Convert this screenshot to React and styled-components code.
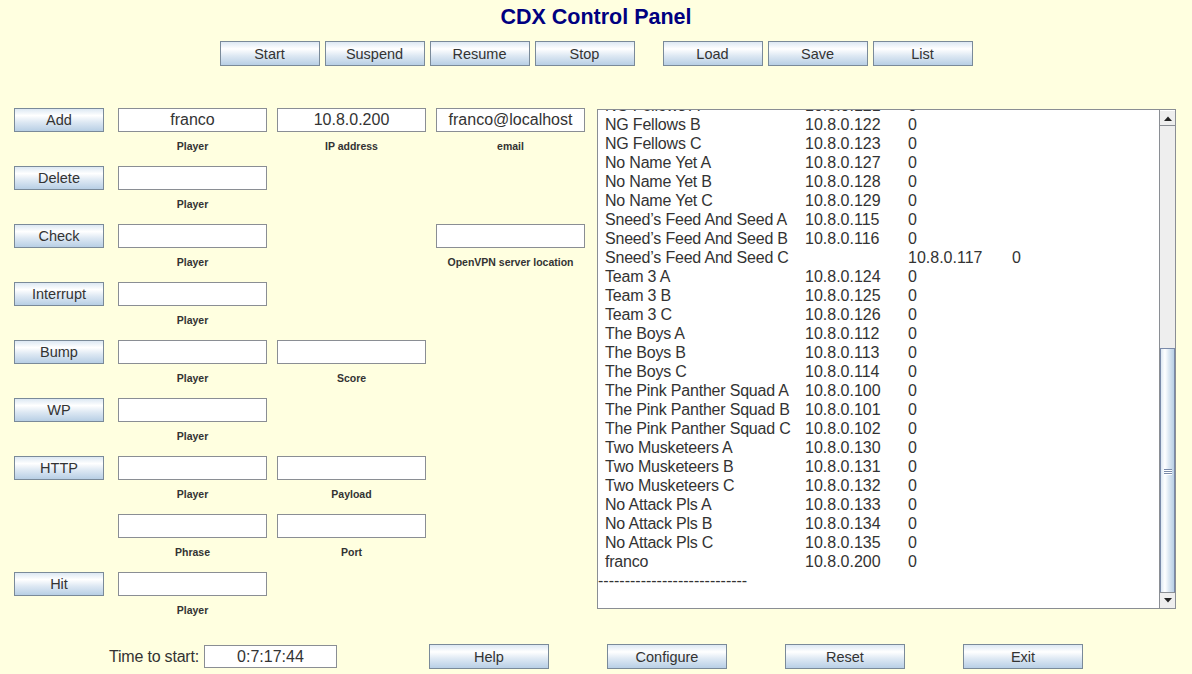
import React from 'react';
import styled, { createGlobalStyle } from 'styled-components';

const GlobalStyle = createGlobalStyle`
  html, body { margin: 0; padding: 0; background: #ffffe0; }
  body { font-family: "Liberation Sans", Arial, sans-serif; color: #333; }
`;

const FONT = `"Liberation Sans", Arial, sans-serif`;

const Page = styled.div`
  width: 1192px;
  height: 674px;
  display: flex;
  flex-direction: column;
  background: #ffffe0;
  overflow: hidden;
`;

const Title = styled.h1`
  margin: 0;
  padding-top: 5px;
  height: 30px;
  box-sizing: border-box;
  font: bold 21.5px/25px ${FONT};
  color: #000080;
  text-align: center;
`;

const Toolbar = styled.div`
  display: flex;
  justify-content: center;
  gap: 28px;
  margin-top: 11px;
`;

const BtnGroup = styled.div`
  display: flex;
  gap: 5px;
`;

const Btn = styled.button`
  box-sizing: border-box;
  width: ${p => p.$w || 90}px;
  height: ${p => p.$h || 24}px;
  padding: 0;
  border: 1px solid #7a8a99;
  border-radius: 0;
  background: linear-gradient(to bottom, #dde8f3 0%, #ffffff 30%, #dde8f3 60%, #b8cfe5 100%);
  font: 14.5px ${FONT};
  color: #333;
  cursor: pointer;
`;

const Main = styled.div`
  display: flex;
  align-items: flex-start;
  margin-top: 42px;
`;

const LeftPanel = styled.div`
  width: 585px;
  padding-left: 14px;
  box-sizing: border-box;
  display: flex;
  flex-direction: column;
`;

const FormRow = styled.div`
  display: grid;
  grid-template-columns: 104px 159px 159px 149px;
  height: 58px;
  flex-shrink: 0;
  align-items: start;
`;

const Field = styled.div`
  display: flex;
  flex-direction: column;
  align-items: center;
  width: 149px;
`;

const Input = styled.input`
  box-sizing: border-box;
  width: ${p => p.$w || 149}px;
  height: ${p => p.$h || 24}px;
  margin: 0 0 0 ${p => p.$ml || 0}px;
  padding: 0 2px;
  border: 1px solid #8a8e94;
  border-radius: 0;
  background: #fff;
  font: 16px ${FONT};
  color: #333;
  text-align: center;
  outline: none;
`;

const Caption = styled.div`
  margin-top: 8px;
  font: bold 10.5px/12px ${FONT};
  color: #333;
  white-space: nowrap;
`;

const ListBox = styled.div`
  box-sizing: border-box;
  width: 579px;
  height: 500px;
  margin-left: 12px;
  margin-top: 1px;
  border: 1px solid #8a8e94;
  background: #fff;
  display: flex;
  flex-shrink: 0;
`;

const ListView = styled.div`
  flex: 1;
  overflow: hidden;
  font: 16px/19px ${FONT};
  color: #333;
`;

const ListInner = styled.div`
  margin-top: -14px;
`;

const Row = styled.div`
  display: grid;
  grid-template-columns: 200px 103px 104px auto;
  padding-left: ${p => (p.$flush ? 0 : 7)}px;
  height: 19px;
  white-space: pre;
`;

const Name = styled.span`
  letter-spacing: -0.2px;
`;

const ScrollBar = styled.div`
  width: 16px;
  box-sizing: border-box;
  border-left: 1px solid #8a8e94;
  display: flex;
  flex-direction: column;
  background: #eeeeee;
`;

const ArrowBtn = styled.div`
  height: 16px;
  box-sizing: border-box;
  display: flex;
  align-items: center;
  justify-content: center;
  background: #eeeeee;
  border-top: ${p => (p.$down ? '1px solid #8a8e94' : '1px solid #ffffff')};
  border-bottom: ${p => (p.$down ? 'none' : '1px solid #8a8e94')};
`;

const Track = styled.div`
  flex: 1;
  display: flex;
  flex-direction: column;
  justify-content: flex-end;
  background: #eeeeee;
`;

const Thumb = styled.div`
  height: 244px;
  box-sizing: border-box;
  border: 1px solid #7a8aa9;
  border-bottom: none;
  background: linear-gradient(to right, #dde8f3 0%, #ffffff 30%, #dde8f3 60%, #b8cfe5 100%);
  display: flex;
  align-items: center;
  justify-content: center;
`;

const Grip = styled.div`
  display: flex;
  flex-direction: column;
  gap: 1px;
  margin-top: 2px;
`;

const GripLine = styled.div`
  width: 8px;
  height: 1px;
  background: #7a8aa9;
  box-shadow: 0 1px 0 #ffffff;
`;

const BottomBar = styled.div`
  display: flex;
  align-items: center;
  margin-top: 14px;
  height: 25px;
  padding-left: 109px;
`;

const TimeLabel = styled.span`
  font: 16px ${FONT};
  letter-spacing: -0.2px;
  color: #333;
`;

const BottomButtons = styled.div`
  display: flex;
  gap: 58px;
  margin-left: 92px;
`;

const Triangle = ({ down }) => (
  <svg width="8" height="5" viewBox="0 0 8 5">
    <polygon points={down ? '0,0 8,0 4,4.5' : '0,5 8,5 4,0.5'} fill="#222" />
  </svg>
);

const formRows = [
  { btn: 'Add', fields: [{ v: 'franco', l: 'Player' }, { v: '10.8.0.200', l: 'IP address' }, { v: 'franco@localhost', l: 'email' }] },
  { btn: 'Delete', fields: [{ v: '', l: 'Player' }] },
  { btn: 'Check', fields: [{ v: '', l: 'Player' }, null, { v: '', l: 'OpenVPN server location' }] },
  { btn: 'Interrupt', fields: [{ v: '', l: 'Player' }] },
  { btn: 'Bump', fields: [{ v: '', l: 'Player' }, { v: '', l: 'Score' }] },
  { btn: 'WP', fields: [{ v: '', l: 'Player' }] },
  { btn: 'HTTP', fields: [{ v: '', l: 'Player' }, { v: '', l: 'Payload' }] },
  { btn: null, fields: [{ v: '', l: 'Phrase' }, { v: '', l: 'Port' }] },
  { btn: 'Hit', fields: [{ v: '', l: 'Player' }] },
];

const listRows = [
  ['NG Fellows A', '10.8.0.121', '0'],
  ['NG Fellows B', '10.8.0.122', '0'],
  ['NG Fellows C', '10.8.0.123', '0'],
  ['No Name Yet A', '10.8.0.127', '0'],
  ['No Name Yet B', '10.8.0.128', '0'],
  ['No Name Yet C', '10.8.0.129', '0'],
  ['Sneed\u2019s Feed And Seed A', '10.8.0.115', '0'],
  ['Sneed\u2019s Feed And Seed B', '10.8.0.116', '0'],
  ['Sneed\u2019s Feed And Seed C', '', '10.8.0.117', '0'],
  ['Team 3 A', '10.8.0.124', '0'],
  ['Team 3 B', '10.8.0.125', '0'],
  ['Team 3 C', '10.8.0.126', '0'],
  ['The Boys A', '10.8.0.112', '0'],
  ['The Boys B', '10.8.0.113', '0'],
  ['The Boys C', '10.8.0.114', '0'],
  ['The Pink Panther Squad A', '10.8.0.100', '0'],
  ['The Pink Panther Squad B', '10.8.0.101', '0'],
  ['The Pink Panther Squad C', '10.8.0.102', '0'],
  ['Two Musketeers A', '10.8.0.130', '0'],
  ['Two Musketeers B', '10.8.0.131', '0'],
  ['Two Musketeers C', '10.8.0.132', '0'],
  ['No Attack Pls A', '10.8.0.133', '0'],
  ['No Attack Pls B', '10.8.0.134', '0'],
  ['No Attack Pls C', '10.8.0.135', '0'],
  ['franco', '10.8.0.200', '0'],
];

export default function App() {
  return (
    <Page>
      <GlobalStyle />
      <Title>CDX Control Panel</Title>
      <Toolbar>
        <BtnGroup>
          {['Start', 'Suspend', 'Resume', 'Stop'].map(t => (
            <Btn key={t} $w={100} $h={25}>{t}</Btn>
          ))}
        </BtnGroup>
        <BtnGroup>
          {['Load', 'Save', 'List'].map(t => (
            <Btn key={t} $w={100} $h={25}>{t}</Btn>
          ))}
        </BtnGroup>
      </Toolbar>
      <Main>
        <LeftPanel>
          {formRows.map((r, i) => (
            <FormRow key={i}>
              <div>{r.btn && <Btn>{r.btn}</Btn>}</div>
              {[0, 1, 2].map(j => {
                const f = r.fields[j];
                return f ? (
                  <Field key={j}>
                    <Input readOnly value={f.v} />
                    <Caption>{f.l}</Caption>
                  </Field>
                ) : (
                  <div key={j} />
                );
              })}
            </FormRow>
          ))}
        </LeftPanel>
        <ListBox>
          <ListView>
            <ListInner>
              {listRows.map((r, i) => (
                <Row key={i}>
                  {r.map((c, k) => (k === 0 ? <Name key={k}>{c}</Name> : <span key={k}>{c}</span>))}
                </Row>
              ))}
              <Row $flush>{'-'.repeat(28)}</Row>
            </ListInner>
          </ListView>
          <ScrollBar>
            <ArrowBtn><Triangle /></ArrowBtn>
            <Track>
              <Thumb>
                <Grip>
                  <GripLine />
                  <GripLine />
                  <GripLine />
                </Grip>
              </Thumb>
            </Track>
            <ArrowBtn $down><Triangle down /></ArrowBtn>
          </ScrollBar>
        </ListBox>
      </Main>
      <BottomBar>
        <TimeLabel>Time to start:</TimeLabel>
        <Input readOnly value="0:7:17:44" $w={133} $h={23} $ml={5} />
        <BottomButtons>
          {['Help', 'Configure', 'Reset', 'Exit'].map(t => (
            <Btn key={t} $w={120} $h={25}>{t}</Btn>
          ))}
        </BottomButtons>
      </BottomBar>
    </Page>
  );
}
